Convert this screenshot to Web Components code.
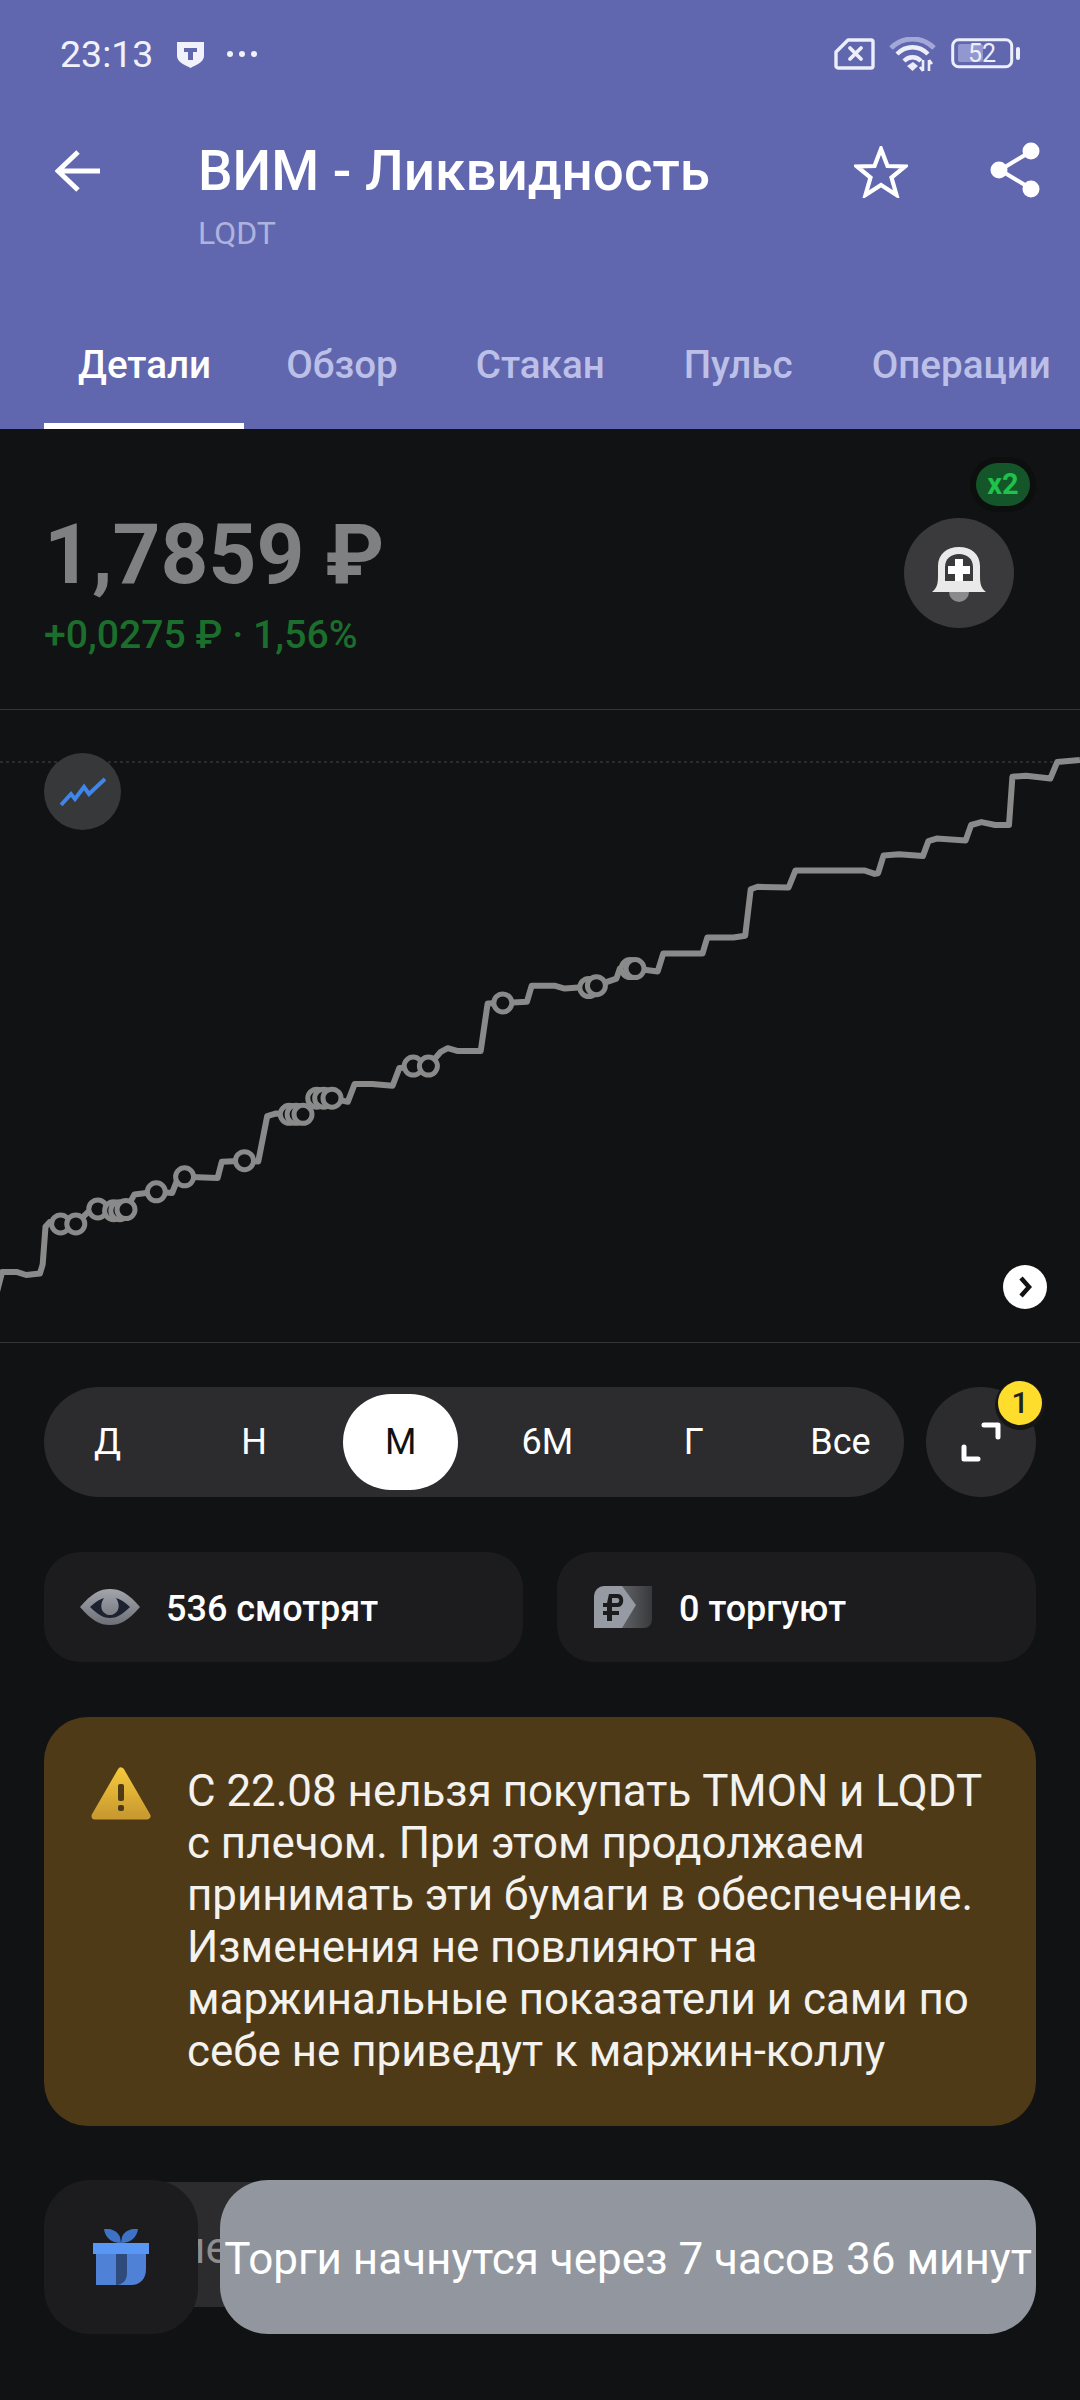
<!doctype html>
<html lang="ru">
<head>
<meta charset="utf-8">
<title>ВИМ - Ликвидность</title>
<style>
    html,body{margin:0;padding:0;background:#111213;}
    body{width:1080px;height:2400px;overflow:hidden;font-family:Roboto,"Noto Sans",sans-serif;color:#fff;}
</style>
</head>
<body>
<app-screen>
    <top-bar title="ВИМ - Ликвидность" ticker="LQDT"></top-bar>
    <price-head price="1,7859 ₽" change="+0,0275 ₽ · 1,56%"></price-head>
    <price-chart></price-chart>
    <period-row></period-row>
    <stats-row></stats-row>
    <warn-card>С 22.08 нельзя покупать TMON и LQDT с плечом. При этом продолжаем принимать эти бумаги в обеспечение. Изменения не повлияют на маржинальные показатели и сами по себе не приведут к маржин-коллу</warn-card>
    <promo-row toast="Торги начнутся через 7 часов 36 минут"></promo-row>
</app-screen>
<script>
class AppScreen extends HTMLElement {
    constructor() {
        super();
        this.attachShadow({ mode: 'open' }).innerHTML = `
        <style>
        :host{display:flex;flex-direction:column;width:1080px;height:2400px;}
        ::slotted(*){flex:none;}
        </style>
        <slot></slot>`;
    }
}
customElements.define('app-screen', AppScreen);

class TopBar extends HTMLElement {
    constructor() {
        super();
        this.attachShadow({ mode: 'open' }).innerHTML = `
        <style>
        :host{display:block;height:429px;background:#6167ae;color:#fff;box-sizing:border-box;}
        .status{display:flex;align-items:center;height:108px;padding:0 60px 0 60px;}
        .time{font-size:37.500px;line-height:40px;color:#f0f1fa;}
        .shield{margin-left:24px;}
        .dots{margin-left:22px;}
        .right{margin-left:auto;display:flex;align-items:center;}
        .nav{display:flex;height:144px;padding-left:55px;padding-right:40px;}
        .nav .back{margin-top:41px;margin-right:98px;flex:none;}
        .titles{flex:1;}
        h1{margin:0;font-size:54.800px;font-weight:500;line-height:62px;margin-top:32px;white-space:nowrap;}
        .ticker{font-size:32px;line-height:36px;margin-top:13px;color:#aeb3de;}
        .star{margin-top:38px;margin-right:82px;}
        .share{margin-top:34px;}
        .tabs{display:flex;height:177px;padding:84px 0 0 44px;box-sizing:border-box;position:relative;}
        .tab{font-size:38.600px;font-weight:500;color:#bcc0e8;line-height:44px;white-space:nowrap;margin-top:7px;}
        .tab.on{color:#fff;}
        .tab:nth-child(1){margin-left:34px;}
        .tab:nth-child(2){margin-left:75px;}
        .tab:nth-child(3){margin-left:78px;}
        .tab:nth-child(4){margin-left:79px;}
        .tab:nth-child(5){margin-left:79px;}
        .ind{position:absolute;left:44px;bottom:0;width:200px;height:6px;background:#fff;}
        </style>
        <div class="status">
            <span class="time">23:13</span>
            <svg class="shield" width="27" height="27" viewBox="0 0 27 27"><path d="M0 1 H27 V15 C27 21 19 24 13.500 27 C8 24 0 21 0 15Z" fill="#f0f1fa"/><path d="M7 7 H20 V11 H16 V19 H11 V11 H7Z" fill="#6167ae"/></svg>
            <svg class="dots" width="32" height="8" viewBox="0 0 32 8"><circle cx="4" cy="4" r="3" fill="#f0f1fa"/><circle cx="16" cy="4" r="3" fill="#f0f1fa"/><circle cx="28" cy="4" r="3" fill="#f0f1fa"/></svg>
            <div class="right">
                <svg width="41" height="32" viewBox="0 0 41 32"><path d="M14 2 H37 A2 2 0 0 1 39 4 V28 A2 2 0 0 1 37 30 H4 A2 2 0 0 1 2 28 V14Z" fill="none" stroke="#eceefa" stroke-width="3.400" stroke-linejoin="round"/><path d="M16 10 L27 21 M27 10 L16 21" stroke="#eceefa" stroke-width="3.800" stroke-linecap="round"/></svg>
                <svg style="margin-left:14px" width="47" height="35" viewBox="0 0 47 35">
                    <path d="M2 11 C14 -1 33 -1 45 11" fill="none" stroke="#a4a8d8" stroke-width="5"/>
                    <path d="M8 17 C17 8 30 8 39 17" fill="none" stroke="#eceefa" stroke-width="4.400"/>
                    <path d="M15 24 C20 19 27 19 32 24" fill="none" stroke="#eceefa" stroke-width="4.400"/>
                    <path d="M18 29 L24 25 L29 29 L23.500 34Z" fill="#eceefa"/>
                    <path d="M34 23 V34 M31 30 L34 34 M40 23 V34 M43 27 L40 23" stroke="#eceefa" stroke-width="2.600" fill="none"/>
                </svg>
                <svg style="margin-left:15px" width="69" height="32" viewBox="0 0 69 32">
                    <rect x="1.700" y="1.700" width="59" height="27" rx="6" fill="none" stroke="#eceefa" stroke-width="3"/>
                    <rect x="7" y="6" width="25" height="18" rx="2" fill="#9297d0"/>
                    <rect x="65" y="9" width="4" height="13" rx="2" fill="#eceefa"/>
                    <text x="31" y="24" text-anchor="middle" font-family="Roboto" font-size="25" fill="#eceefa">52</text>
                </svg>
            </div>
        </div>
        <div class="nav">
            <svg class="back" width="45" height="44" viewBox="0 0 45 44"><path d="M2 22 H45 M23 3 L3 22 L23 41" fill="none" stroke="#fff" stroke-width="5"/></svg>
            <div class="titles">
                <h1>${this.getAttribute('title')}</h1>
                <div class="ticker">${this.getAttribute('ticker')}</div>
            </div>
            <svg class="star" width="54" height="52" viewBox="0 0 54 52"><path d="M27 3 L33.500 20 L51 20.500 L37.500 31.500 L42.500 49 L27 39 L11.500 49 L16.500 31.500 L3 20.500 L20.500 20Z" fill="none" stroke="#fff" stroke-width="4.200"/></svg>
            <svg class="share" width="50" height="56" viewBox="0 0 50 56"><path d="M40 10 L10 28 L40 46" fill="none" stroke="#fff" stroke-width="4"/><circle cx="41" cy="9" r="8.500" fill="#fff"/><circle cx="9" cy="28" r="8.500" fill="#fff"/><circle cx="41" cy="47" r="8.500" fill="#fff"/></svg>
        </div>
        <div class="tabs">
            <span class="tab on">Детали</span><span class="tab">Обзор</span><span class="tab">Стакан</span><span class="tab">Пульс</span><span class="tab">Операции</span>
            <div class="ind"></div>
        </div>`;
    }
}
customElements.define('top-bar', TopBar);

class PriceHead extends HTMLElement {
    constructor() {
        super();
        this.attachShadow({ mode: 'open' }).innerHTML = `
        <style>
        :host{display:block;position:relative;height:281px;box-sizing:border-box;padding:77px 0 0 44px;border-bottom:1px solid #333436;}
        .price{font-size:83.600px;font-weight:700;line-height:96px;color:#7f8081;white-space:nowrap;}
        .change{font-size:39.200px;font-weight:500;line-height:42px;color:#1b6e2c;margin-top:12px;white-space:nowrap;}
        .bell{position:absolute;left:904px;top:89px;width:110px;height:110px;border-radius:50%;background:#3a3a3c;display:flex;align-items:center;justify-content:center;}
        .x2{position:absolute;left:976px;top:34px;width:54px;height:43px;border-radius:22px;background:#14562a;box-shadow:0 0 0 6px #0d0e0e;color:#1fc24a;font-size:29px;font-weight:700;line-height:43px;text-align:center;}
        </style>
        <div class="price">${this.getAttribute('price')}</div>
        <div class="change">${this.getAttribute('change')}</div>
        <div class="bell">
            <svg width="56" height="58" viewBox="0 0 56 58" style="margin-top:4px">
                <circle cx="28" cy="46" r="10" fill="#8b8b8d"/>
                <path d="M1 46 C6 42 7 38 7 30 V20 C7 8 16 1 28 1 C40 1 49 8 49 20 V30 C49 38 50 42 55 46Z" fill="#e9e9ea"/>
                <path d="M14 35 V21 C14 13 20 8 28 8 C36 8 42 13 42 21 V35Z" fill="#3a3a3c"/>
                <path d="M24 13 H32 V20 H39 V28 H32 V35 H24 V28 H17 V20 H24Z" fill="#fff"/>
            </svg>
        </div>
        <div class="x2">x2</div>`;
    }
}
customElements.define('price-head', PriceHead);

class PriceChart extends HTMLElement {
    constructor() {
        super();
        this.attachShadow({ mode: 'open' }).innerHTML = `
        <style>
        :host{display:block;position:relative;height:633px;box-sizing:border-box;border-bottom:1px solid #333436;}
        svg.plot{display:block;position:absolute;left:0;top:0;}
        .type{position:absolute;left:44px;top:43px;width:77px;height:77px;border-radius:50%;background:#37383a;display:flex;align-items:center;justify-content:center;}
        .next{position:absolute;left:1003px;top:555px;width:44px;height:44px;border-radius:50%;background:#fff;display:flex;align-items:center;justify-content:center;}
        </style>
        <svg class="plot" width="1080" height="632" viewBox="0 710 1080 632" id="plot"></svg>
        <div class="type"><svg width="46" height="30" viewBox="0 0 46 30"><path d="M1 28 L11 17 L15 22 L24 10 L29 17 L45 2" fill="none" stroke="#3f86e8" stroke-width="4"/></svg></div>
        <div class="next"><svg width="18" height="24" viewBox="0 0 18 24"><path d="M5 3 L13 12 L5 21" fill="none" stroke="#111213" stroke-width="4.500"/></svg></div>`;
        // точки сняты с зума: x/1.452, 800+y/2.8
        const raw = [[-4,1375],[3,1322],[25,1322],[38,1330],[58,1326],[62,1300],[66,1195],[72,1182],[90,1185],[110,1187],[130,1150],[142,1145],[165,1150],[183,1147],[195,1105],[227,1097],[250,1100],[258,1060],[268,1055],[316,1058],[322,1013],[355,1010],[375,1012],[388,885],[400,878],[440,880],[455,838],[482,835],[505,845],[515,795],[540,795],[570,800],[580,750],[622,745],[640,705],[650,695],[665,703],[698,703],[708,570],[730,568],[765,565],[772,520],[805,520],[820,528],[840,525],[866,520],[895,500],[900,472],[922,472],[955,480],[963,430],[1020,430],[1027,385],[1065,385],[1082,380],[1090,250],[1100,243],[1145,245],[1155,197],[1255,197],[1270,207],[1275,205],[1283,155],[1305,152],[1340,157],[1348,115],[1360,108],[1402,113],[1410,70],[1425,62],[1445,70],[1465,70],[1470,-65],[1490,-68],[1525,-60],[1535,-106],[1568,-112]];
        const dots = [[88,1187],[110,1187],[142,1145],[165,1150],[174,1150],[183,1147],[227,1097],[268,1055],[355,1010],[420,880],[430,880],[440,880],[460,835],[470,835],[482,835],[600,745],[622,745],[730,568],[855,525],[866,520],[915,472],[922,472]];
        const map = p => [+(p[0]/1.452).toFixed(1), +(800+p[1]/2.8).toFixed(1)];
        const d = raw.map(map).map((p,i)=>(i?'L':'M')+p[0]+' '+p[1]).join(' ');
        let html = `<path d="M0 762 H1080" stroke="#2b2c2e" stroke-width="2" stroke-dasharray="3 3"/>`;
        html += `<path d="${d}" fill="none" stroke="#8a8a8a" stroke-width="6" stroke-linejoin="round"/>`;
        for (const p of dots.map(map)) {
            html += `<circle cx="${p[0]}" cy="${p[1]}" r="9" fill="#111213" stroke="#8a8a8a" stroke-width="5"/>`;
        }
        this.shadowRoot.getElementById('plot').innerHTML = html;
    }
}
customElements.define('price-chart', PriceChart);

class PeriodRow extends HTMLElement {
    constructor() {
        super();
        const items = ['Д','Н','М','6М','Г','Все'];
        this.attachShadow({ mode: 'open' }).innerHTML = `
        <style>
        :host{display:flex;gap:22px;padding:44px 44px 0 44px;}
        .pill{flex:1;height:110px;border-radius:55px;background:#2c2c2e;display:flex;justify-content:space-between;align-items:center;padding:0 6px;box-sizing:border-box;}
        .it{width:115px;height:96px;border-radius:48px;display:flex;align-items:center;justify-content:center;font-size:36px;color:#fff;}
        .it.on{background:#fff;color:#111;}
        .exp{position:relative;width:110px;height:110px;border-radius:50%;background:#2c2c2e;flex:none;display:flex;align-items:center;justify-content:center;}
        .num{position:absolute;left:72px;top:-6px;width:44px;height:44px;border-radius:50%;background:#ffdd2d;color:#222;font-size:30px;font-weight:500;line-height:44px;text-align:center;box-shadow:0 2px 0 3px #161616;}
        </style>
        <div class="pill">${items.map((t,i)=>`<span class="it${i==2?' on':''}">${t}</span>`).join('')}</div>
        <div class="exp">
            <svg width="40" height="40" viewBox="0 0 40 40"><path d="M23 3 H37 V15 M3 25 V37 H17" fill="none" stroke="#fff" stroke-width="5" stroke-linejoin="round" stroke-linecap="round"/></svg>
            <span class="num">1</span>
        </div>`;
    }
}
customElements.define('period-row', PeriodRow);

class StatsRow extends HTMLElement {
    constructor() {
        super();
        this.attachShadow({ mode: 'open' }).innerHTML = `
        <style>
        :host{display:flex;gap:34px;padding:55px 44px 0 44px;}
        .card{flex:1;height:110px;border-radius:36px;background:#1c1c1e;display:flex;align-items:center;font-size:36px;font-weight:500;white-space:nowrap;}
        .card span{line-height:44px;margin-top:4px;}
        .a svg{margin:0 26px 0 36px;}
        .b svg{margin:0 27px 0 37px;}
        </style>
        <div class="card a">
            <svg width="60" height="36" viewBox="0 0 60 36"><defs><linearGradient id="g1" x1="0" y1="0" x2="0" y2="1"><stop offset="0" stop-color="#a2a5ac"/><stop offset="1" stop-color="#6d7076"/></linearGradient></defs><path d="M0 18 C12 4 20 0 30 0 C40 0 48 4 60 18 C48 32 40 36 30 36 C20 36 12 32 0 18Z" fill="url(#g1)"/><path d="M10 18 C15 13 20 10 24 9 C18 18 23 26 30 26 C37 26 42 18 36 9 C40 10 45 13 50 18 C42 26 36 29 30 29 C24 29 18 26 10 18Z" fill="#1c2230"/></svg>
            <span>536 смотрят</span>
        </div>
        <div class="card b">
            <svg width="58" height="42" viewBox="0 0 58 42"><defs><linearGradient id="g2" x1="0" y1="0" x2="1" y2="0"><stop offset="0" stop-color="#6b6d72"/><stop offset="1" stop-color="#38393c"/></linearGradient></defs><path d="M20 0 H58 V34 A8 8 0 0 1 50 42 H20Z" fill="url(#g2)"/><path d="M10 0 H28 L42 19 L28 42 H0 V10 A10 10 0 0 1 10 0Z" fill="#969aa3"/><path d="M15 8 H24 C31 8 31 21 24 21 H18 V25 H25 V29 H18 V35 H13 V29 H9 V25 H13 V21 H9 V17 H13Z M18 12 V17 H23 C26 17 26 12 23 12Z" fill="#1c1c1e" fill-rule="evenodd"/></svg>
            <span>0 торгуют</span>
        </div>`;
    }
}
customElements.define('stats-row', StatsRow);

class WarnCard extends HTMLElement {
    constructor() {
        super();
        this.attachShadow({ mode: 'open' }).innerHTML = `
        <style>
        :host{display:flex;margin:55px 44px 0 44px;height:409px;box-sizing:border-box;padding:48px 0 0 47px;border-radius:44px;background:#4f3a17;}
        svg{flex:none;margin-top:2px;}
        .txt{font-size:43.900px;line-height:52px;margin-left:36px;width:815px;color:#f4f2ee;}
        </style>
        <svg width="60" height="54" viewBox="0 0 60 54"><defs><linearGradient id="w" x1="0" y1="0" x2="0" y2="1"><stop offset="0" stop-color="#f4c63a"/><stop offset="1" stop-color="#c89a30"/></linearGradient></defs><path d="M30 4 L56 49 H4Z" fill="url(#w)" stroke="url(#w)" stroke-width="7" stroke-linejoin="round"/><rect x="27" y="17" width="6" height="17" rx="2" fill="#4f3a17"/><rect x="27" y="38" width="6" height="6" rx="2" fill="#4f3a17"/></svg>
        <div class="txt"><slot></slot></div>`;
    }
}
customElements.define('warn-card', WarnCard);

class PromoRow extends HTMLElement {
    constructor() {
        super();
        this.attachShadow({ mode: 'open' }).innerHTML = `
        <style>
        :host{display:flex;position:relative;margin:54px 44px 0 44px;height:154px;}
        .gift{width:154px;height:154px;border-radius:46px;background:#1c1c1e;display:flex;align-items:center;justify-content:center;flex:none;position:relative;z-index:1;}
        .bar{height:125px;width:130px;margin-top:2px;margin-left:-40px;padding-left:22px;background:#2c2c2e;font-size:44px;line-height:132px;color:#8e8e90;}
        .toast{position:absolute;left:176px;right:0;top:0;height:154px;border-radius:48px;background:#92979f;color:#fff;font-size:44px;line-height:158px;text-align:center;white-space:nowrap;z-index:2;}
        </style>
        <div class="gift"><svg width="56" height="56" viewBox="0 0 56 56"><path d="M11 0 C17 -1 25 2 27 8 L28 14 C18 14 12 8 11 0Z M45 0 C39 -1 31 2 29 8 L28 14 C38 14 44 8 45 0Z" fill="#3d72c4"/><rect x="0" y="14" width="56" height="11" fill="#5a97f4"/><path d="M3 25 H53 V40 C53 50 47 56 38 56 H3Z" fill="#4f82d6"/><path d="M23 25 H34 V44 C34 50 31 55 24 56 H23Z" fill="#2f4a7d"/></svg></div>
        <div class="bar">ие</div>
        <div class="toast">${this.getAttribute('toast')}</div>`;
    }
}
customElements.define('promo-row', PromoRow);
</script>
</body>
</html>
